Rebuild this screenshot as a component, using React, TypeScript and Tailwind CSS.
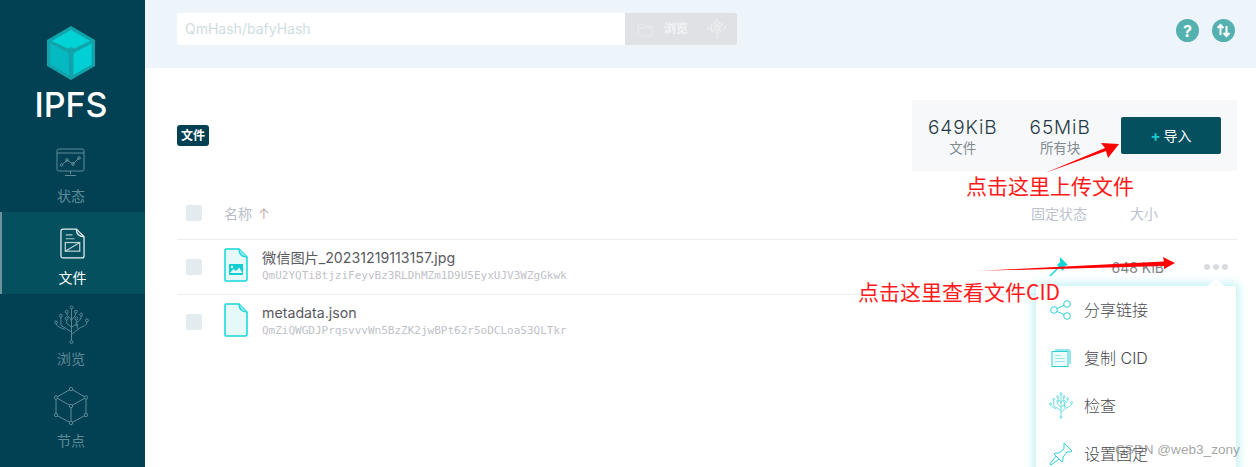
const cjk = { fontFamily: 'Inter, "Noto Sans CJK SC", sans-serif' }

function CubeLogo() {
  return (
    <svg width="50" height="56" viewBox="0 0 52 58">
      <path d="M26 1 51 15.500 51 42.500 26 57 1 42.500 1 15.500Z" fill="#12a3aa" />
      <path d="M26 5 46 16.500 26 26 6 16.500Z" fill="#00d3d6" />
      <path d="M4.500 19 23.500 29 24 52 4.500 41Z" fill="#05b9c2" />
      <path d="M28.500 29 47.500 19 47.500 41 28.500 52Z" fill="#00d0d5" />
      <circle cx="26" cy="27" r="4" fill="#12a3aa" />
    </svg>
  )
}

function StatusIcon() {
  return (
    <svg width="30" height="30" viewBox="0 0 30 30" fill="none" stroke="#5f8b98" strokeWidth="1">
      <rect x="1" y="1" width="27" height="22" rx="1.500" />
      <path d="M1 5h27M14.500 23v3M9 27.500h11" />
      <path d="M6 17l5-5 6 4 6-6" />
      <circle cx="5.500" cy="17" r="1.300" />
      <circle cx="11" cy="12" r="1.300" />
      <circle cx="17" cy="16" r="1.300" />
      <circle cx="23" cy="10" r="1.300" />
    </svg>
  )
}

function FilesIcon() {
  return (
    <svg width="25" height="31" viewBox="0 0 26 32" fill="none" stroke="#e8f0f2" strokeWidth="1.300">
      <path d="M3 1h14l8 8v20a2 2 0 0 1-2 2H3a2 2 0 0 1-2-2V3a2 2 0 0 1 2-2Z" />
      <path d="M17 1c0 5 2 8 8 8" />
      <path d="M6 7h7M6 11h9" strokeWidth="1.100" opacity=".75" />
      <rect x="5.500" y="15" width="15" height="9" opacity=".8" />
      <path d="M5.500 24l15-9" opacity=".8" />
    </svg>
  )
}

function TreeIcon({ color, size, stroke = 1 }: { color: string; size: number; stroke?: number }) {
  return (
    <svg width={size} height={size * 1.130} viewBox="0 0 36 41" fill="none" stroke={color} strokeWidth={stroke}>
      <circle cx="18" cy="2.500" r="1.500" />
      <circle cx="18" cy="38.500" r="1.500" />
      <circle cx="13" cy="7" r="1.500" />
      <circle cx="22.500" cy="7" r="1.500" />
      <circle cx="7" cy="11" r="1.500" />
      <circle cx="28" cy="10" r="1.500" />
      <circle cx="13" cy="14" r="1.500" />
      <circle cx="23" cy="14" r="1.500" />
      <circle cx="2" cy="18" r="1.500" />
      <circle cx="34" cy="16" r="1.500" />
      <path d="M18 4v33M13 8.500c0 4 5 5 5 8M22.500 8.500c0 4-4.500 5-4.500 8" />
      <path d="M7 12.500V21l11 7M13 15.500V19l5 4M23 15.500V20l-5 3M28 11.500c0 5-5 6-5 7.500v3" />
      <path d="M2 19.500c1 3 5 4 9 6M34 17.500c0 4-5 5-7 6l-9 7" />
      <path d="M24 19.500v5" />
    </svg>
  )
}

function PeersIcon() {
  return (
    <svg width="36" height="38" viewBox="0 0 36 38" fill="none" stroke="#5f8b98" strokeWidth="1">
      <path d="M18 2 33 10.500V28L18 36 3 28V10.500Z" />
      <path d="M3 10.500 18 19l15-8.500M18 19v17" />
      <circle cx="18" cy="2" r="1.700" fill="#024054" />
      <circle cx="33" cy="10.500" r="1.700" fill="#024054" />
      <circle cx="33" cy="28" r="1.700" fill="#024054" />
      <circle cx="18" cy="36" r="1.700" fill="#024054" />
      <circle cx="3" cy="28" r="1.700" fill="#024054" />
      <circle cx="3" cy="10.500" r="1.700" fill="#024054" />
      <circle cx="18" cy="19" r="1.700" fill="#024054" />
    </svg>
  )
}

function Sidebar() {
  const items = [
    { label: '状态', icon: <StatusIcon />, pt: 'pt-[18px]', gap: 'mt-[8px]' },
    { label: '文件', icon: <FilesIcon />, active: true, pt: 'pt-[16px]', gap: 'mt-[9px]' },
    { label: '浏览', icon: <TreeIcon color="#5f8b98" size={35} />, pt: 'pt-[11px]', gap: 'mt-[4px]' },
    { label: '节点', icon: <PeersIcon />, pt: 'pt-[11px]', gap: 'mt-[6px]' },
  ]
  return (
    <div className="w-[145px] shrink-0 bg-[#024054] h-full">
      <div className="h-[130px] flex flex-col items-center pt-[25px] pr-[3px]">
        <CubeLogo />
        <div className="text-white text-[34px] leading-[34px] mt-[7px] font-medium" style={cjk}>IPFS</div>
      </div>
      {items.map((item) => (
        <div
          key={item.label}
          className={`h-[82px] flex flex-col items-center ${item.pt} ${item.active ? 'bg-[#04505f] border-l-2 border-[#6d929d] pr-[2px]' : 'pr-[3px]'}`}
        >
          {item.icon}
          <div
            className={`${item.gap} text-[14px] leading-[20px] ${item.active ? 'text-white' : 'text-[#5f8b98]'}`}
            style={cjk}
          >
            {item.label}
          </div>
        </div>
      ))}
    </div>
  )
}

function Header() {
  return (
    <div className="h-[68px] bg-[#edf5fb] flex items-start pl-[32px] pr-[21px] pt-[13px]">
      <div className="flex w-[560px] h-[32px] rounded-[3px] overflow-hidden">
        <div className="w-[448px] bg-white pl-[8px] text-[14px] leading-[32px] text-[#cfdde0]" style={cjk}>
          QmHash/bafyHash
        </div>
        <div className="flex-1 bg-[#dfe1e5] flex items-center pl-[12px] gap-[11px]">
          <svg width="16" height="15" viewBox="0 0 16 15" fill="none" stroke="#e9ebee" strokeWidth="1">
            <path d="M1 3a1 1 0 0 1 1-1h4l2 2h6a1 1 0 0 1 1 1v8a1 1 0 0 1-1 1H2a1 1 0 0 1-1-1Z" />
            <path d="M1 6h14" />
          </svg>
          <span className="text-[12px] font-bold text-[#f2f3f5]" style={cjk}>浏览</span>
          <span className="ml-[9px]"><TreeIcon color="#eff0f2" size={18} stroke={1.800} /></span>
        </div>
      </div>
      <div className="ml-auto flex gap-[13px] mt-[6px]">
        <div className="w-[23px] h-[23px] rounded-full bg-[#55b1af] flex items-center justify-center text-white text-[16px] font-bold" style={cjk}>
          ?
        </div>
        <div className="w-[23px] h-[23px] rounded-full bg-[#55b1af] flex items-center justify-center">
          <svg width="15" height="15" viewBox="0 0 15 15" fill="none" stroke="#fff" strokeWidth="2">
            <path d="M4.500 12V2M1.500 5l3-3 3 3M10.500 3v10M7.500 10l3 3 3-3" />
          </svg>
        </div>
      </div>
    </div>
  )
}

function Stat({ value, label }: { value: string; label: string }) {
  return (
    <div className="flex flex-col items-center">
      <div className="text-[19px] leading-[24px] font-light text-[#1f3a45] tracking-[0.9px]" style={cjk}>{value}</div>
      <div className="text-[13.500px] leading-[16px] text-[#7f8a91]" style={cjk}>{label}</div>
    </div>
  )
}

function Checkbox() {
  return <div className="w-[16px] h-[16px] rounded-[2px] bg-[#e4ebef] shrink-0" />
}

function ImageFileIcon() {
  return (
    <svg width="24" height="34" viewBox="0 0 24 34" fill="none">
      <path d="M2 1h13l8 8v22a2 2 0 0 1-2 2H2a1 1 0 0 1-1-1V2a1 1 0 0 1 1-1Z" fill="#e6f9f9" stroke="#13d6da" strokeWidth="1.500" />
      <path d="M15 1c0 5 2 8 8 8" fill="#8ce8ea" stroke="#13d6da" strokeWidth="1.200" />
      <rect x="5" y="16" width="14" height="11" fill="#12cfd6" />
      <path d="M6 25l3.500-4 2.500 2 3-3.500 3.500 5.500Z" fill="#e6f9f9" />
      <circle cx="8" cy="19" r="1.200" fill="#e6f9f9" />
    </svg>
  )
}

function BlankFileIcon() {
  return (
    <svg width="24" height="34" viewBox="0 0 24 34" fill="none">
      <path d="M2 1h13l8 8v22a2 2 0 0 1-2 2H2a1 1 0 0 1-1-1V2a1 1 0 0 1 1-1Z" fill="#e6f9f9" stroke="#13d6da" strokeWidth="1.500" />
      <path d="M15 1c0 5 2 8 8 8" fill="#8ce8ea" stroke="#13d6da" strokeWidth="1.200" />
    </svg>
  )
}

function FileRow({ name, hash, icon, size }: { name: string; hash: string; icon: React.ReactNode; size?: string }) {
  return (
    <div className="h-[55px] border-t border-[#ebeced] flex items-center pl-[9px]">
      <Checkbox />
      <div className="ml-[22px] mb-[5px] w-[24px] flex justify-center">{icon}</div>
      <div className="ml-[14px] mb-[4px]">
        <div className="text-[14.200px] leading-[20px] text-[#59595f]" style={cjk}>{name}</div>
        <div className="mt-[1px] text-[11px] leading-[14px] text-[#c0c2c9]" style={{ fontFamily: '"DejaVu Sans Mono", monospace' }}>{hash}</div>
      </div>
      {size && (
        <div className="ml-auto flex items-center">
          <svg className="mr-[42px]" width="22" height="22" viewBox="0 0 22 22" fill="#17d6da">
            <path d="M12 1l8 8-3 1-2 5-6-6 3-3Z" />
            <path d="M10 12 2 20" stroke="#17d6da" strokeWidth="1.500" />
          </svg>
          <span className="text-[14px] text-[#7e8288] mr-[40px]" style={cjk}>{size}</span>
          <div className="flex gap-[3px] mr-[9px]">
            <i className="w-[6px] h-[6px] rounded-full bg-[#d9dbe2]" />
            <i className="w-[6px] h-[6px] rounded-full bg-[#d9dbe2]" />
            <i className="w-[6px] h-[6px] rounded-full bg-[#d9dbe2]" />
          </div>
        </div>
      )}
    </div>
  )
}

function ContextMenu() {
  const rows = [
    {
      label: '分享链接',
      icon: (
        <svg width="22" height="20" viewBox="0 0 22 20" fill="none" stroke="#2fd0d5" strokeWidth="1">
          <circle cx="4" cy="10" r="3.300" />
          <circle cx="17" cy="4" r="3.300" />
          <circle cx="17" cy="16" r="3.300" />
          <path d="M7 8.600 14 5.400M7 11.400l7 3.200" />
        </svg>
      ),
    },
    {
      label: '复制 CID',
      icon: (
        <svg width="20" height="18" viewBox="0 0 20 18" fill="none" stroke="#2fd0d5" strokeWidth="1">
          <path d="M4 1h14a1 1 0 0 1 1 1v13" />
          <rect x="1" y="2.500" width="16" height="15" fill="#eefbfb" />
          <path d="M4 6.500h6M4 9.500h10M4 12.500h10" opacity=".45" />
        </svg>
      ),
    },
    { label: '检查', icon: <TreeIcon color="#2fd0d5" size={24} /> },
    {
      label: '设置固定',
      icon: (
        <svg width="24" height="24" viewBox="0 0 24 24" fill="none" stroke="#2fd0d5" strokeWidth="1">
          <path d="M15 1l8 8-2 1-3 0-4 5 0 3-1 2-8-8 2-1 3 0 5-4 0-3Z" />
          <path d="M7 14l-6 8 1 1 8-6" />
        </svg>
      ),
    },
  ]
  return (
    <div className="absolute left-[1036px] top-[286px] w-[200px] h-[200px] bg-white rounded-[2px] shadow-[0_0_10px_3px_rgba(120,225,228,0.45)]">
      <div className="absolute -top-[8px] left-[172px] w-0 h-0 border-l-[8px] border-r-[8px] border-b-[8px] border-l-transparent border-r-transparent border-b-white" />
      {rows.map((row) => (
        <div key={row.label} className="h-[48px] flex items-center">
          <div className="w-[48px] flex justify-center pl-[1px]">{row.icon}</div>
          <span className="text-[16px] font-light text-[#48484e]" style={cjk}>{row.label}</span>
        </div>
      ))}
    </div>
  )
}

function Annotations() {
  const red = { fontFamily: '"Noto Sans CJK SC", sans-serif' }
  return (
    <>
      <svg className="absolute left-0 top-0 pointer-events-none z-10" width="1256" height="467">
        <defs>
          <linearGradient id="fade" x1="0" x2="1" y1="0" y2="0">
            <stop offset="0" stopColor="#ff0000" stopOpacity="0.3" />
            <stop offset="0.2" stopColor="#ff0000" />
          </linearGradient>
        </defs>
        <path d="M1045 173 1105 148 1101 143 1119 144 1108 158 1106 151Z" fill="#ff0000" />
        <path d="M975 271 1164 261.500 1163 257 1175 263 1164 269 1164 266Z" fill="url(#fade)" />
      </svg>
      <div className="absolute left-[966px] top-[170px] text-[21px] leading-[30px] text-[#ff1a1a] z-10" style={red}>点击这里上传文件</div>
      <div className="absolute left-[858px] top-[276px] text-[21px] leading-[30px] text-[#ff1a1a] z-10" style={red}>点击这里查看文件CID</div>
      <div className="absolute left-[1115px] top-[441px] text-[13.600px] leading-[18px] text-[#66666699] z-10" style={{ fontFamily: '"Liberation Sans", sans-serif' }}>CSDN @web3_zony</div>
    </>
  )
}

export default function App() {
  return (
    <div className="relative w-[1256px] h-[467px] overflow-hidden flex bg-white">
      <Sidebar />
      <div className="flex-1 min-w-0">
        <Header />
        <div className="pl-[32px] pr-[19px] pt-[32px]">
          <div className="flex items-center justify-between h-[71px]">
            <div className="bg-[#024054] text-white text-[12px] font-bold rounded-[3px] w-[32px] h-[21px] flex items-center justify-center" style={cjk}>文件</div>
            <div className="w-[325px] h-[71px] bg-[#f7f8fa] flex items-center pl-[16px]">
              <Stat value="649KiB" label="文件" />
              <div className="ml-[32px]"><Stat value="65MiB" label="所有块" /></div>
              <button className="ml-auto mr-[16px] w-[100px] h-[37px] bg-[#04505f] rounded-[2px] text-white text-[14px] flex items-center justify-center gap-[3px]" style={cjk}>
                <span className="text-[#19c8d0] text-[15px] font-bold leading-none">+</span>导入
              </button>
            </div>
          </div>
          <div className="h-[68px] flex items-center pl-[9px] pt-[16px] text-[14px] text-[#b9bdc8]" style={cjk}>
            <Checkbox />
            <span className="ml-[22px]">名称</span>
            <span className="ml-[6px] text-[#c9b4b4]">↑</span>
            <span className="ml-auto text-[#bcc3cf]">固定状态</span>
            <span className="ml-[43px] mr-[79px] text-[#bcc3cf]">大小</span>
          </div>
          <FileRow
            name="微信图片_20231219113157.jpg"
            hash="QmU2YQTi8tjziFeyvBz3RLDhMZm1D9U5EyxUJV3WZgGkwk"
            icon={<ImageFileIcon />}
            size="648 KiB"
          />
          <FileRow
            name="metadata.json"
            hash="QmZiQWGDJPrqsvvvWn5BzZK2jwBPt62r5oDCLoaS3QLTkr"
            icon={<BlankFileIcon />}
          />
        </div>
      </div>
      <ContextMenu />
      <Annotations />
    </div>
  )
}
